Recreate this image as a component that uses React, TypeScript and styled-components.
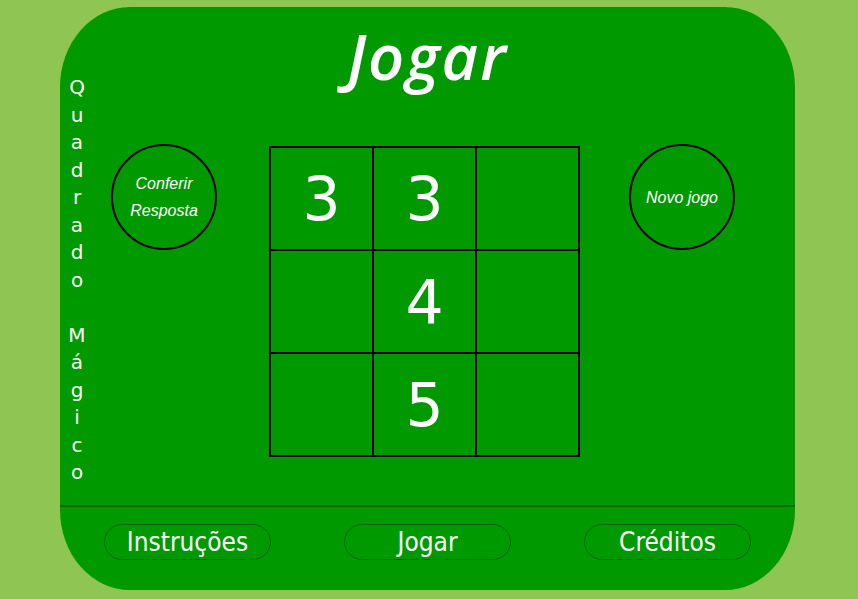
import React from "react";
import styled, { createGlobalStyle } from "styled-components";

const GlobalStyle = createGlobalStyle`
  html, body {
    margin: 0;
    padding: 0;
    background-color: #8fc553;
  }
  body {
    font-family: "Liberation Sans", Arial, sans-serif;
  }
`;

const Page = styled.div`
  width: 858px;
  height: 599px;
  padding: 7px 0 0 60px;
  box-sizing: border-box;
  background-color: #8fc553;
`;

const Panel = styled.div`
  width: 735px;
  height: 583px;
  background-color: #009900;
  border-radius: 70px / 80px;
  display: flex;
  flex-direction: column;
  overflow: hidden;
`;

const Title = styled.h1`
  margin: 0;
  height: 70px;
  line-height: 98px;
  text-align: center;
  color: #ffffff;
  font-family: "Open Sans", sans-serif;
  font-style: italic;
  font-weight: 600;
  font-size: 63px;
  letter-spacing: 2px;
`;

const Main = styled.div`
  height: 428px;
  display: flex;
  align-items: flex-start;
`;

const SideLabel = styled.div`
  width: 34px;
  margin-top: -3px;
  display: flex;
  flex-direction: column;
  align-items: center;
`;

const Letter = styled.span`
  height: 27.5px;
  line-height: 27.5px;
  color: #ffffff;
  font-family: "DejaVu Sans", sans-serif;
  font-size: 20px;
`;

const Board = styled.div`
  flex: 1;
  display: flex;
  align-items: flex-start;
  padding: 67px 0 0 17px;
`;

const RoundButton = styled.button<{ $gapLeft?: number }>`
  width: 106px;
  height: 106px;
  margin-left: ${(p) => p.$gapLeft ?? 0}px;
  border-radius: 50%;
  border: 2px solid #000000;
  background: transparent;
  color: #ffffff;
  font-family: "Liberation Sans", Arial, sans-serif;
  font-style: italic;
  font-size: 16px;
  line-height: 27px;
  padding: 0;
  cursor: pointer;
`;

const Square = styled.div`
  width: 311px;
  height: 311px;
  margin: 2px 0 0 52px;
  box-sizing: border-box;
  padding: 2px;
  gap: 2px;
  background-color: #000000;
  display: grid;
  grid-template-columns: repeat(3, 1fr);
  grid-template-rows: repeat(3, 1fr);
`;

const Cell = styled.div`
  background-color: #009900;
  display: flex;
  align-items: center;
  justify-content: center;
  color: #ffffff;
  font-family: "DejaVu Sans", sans-serif;
  font-size: 60px;
`;

const Footer = styled.div`
  flex: 1;
  border-top: 2px solid #006600;
  display: flex;
  justify-content: center;
  align-items: flex-start;
  gap: 73px;
  padding-top: 17px;
`;

const NavButton = styled.button`
  width: 167px;
  height: 36px;
  border-radius: 18px;
  border: 1px solid #006400;
  background: transparent;
  color: #ffffff;
  font-family: "Liberation Sans Narrow", "DejaVu Sans Condensed", sans-serif;
  font-size: 26px;
  padding: 0;
  cursor: pointer;
`;

const label = "Quadrado Mágico".split("");
const cells = ["3", "3", "", "", "4", "", "", "5", ""];

export default function App() {
  return (
    <>
      <GlobalStyle />
      <Page>
        <Panel>
          <Title>Jogar</Title>
          <Main>
            <SideLabel>
              {label.map((ch, i) => (
                <Letter key={i}>{ch === " " ? "\u00a0" : ch}</Letter>
              ))}
            </SideLabel>
            <Board>
              <RoundButton>
                Conferir
                <br />
                Resposta
              </RoundButton>
              <Square>
                {cells.map((v, i) => (
                  <Cell key={i}>{v}</Cell>
                ))}
              </Square>
              <RoundButton $gapLeft={49}>Novo jogo</RoundButton>
            </Board>
          </Main>
          <Footer>
            <NavButton>Instruções</NavButton>
            <NavButton>Jogar</NavButton>
            <NavButton>Créditos</NavButton>
          </Footer>
        </Panel>
      </Page>
    </>
  );
}
